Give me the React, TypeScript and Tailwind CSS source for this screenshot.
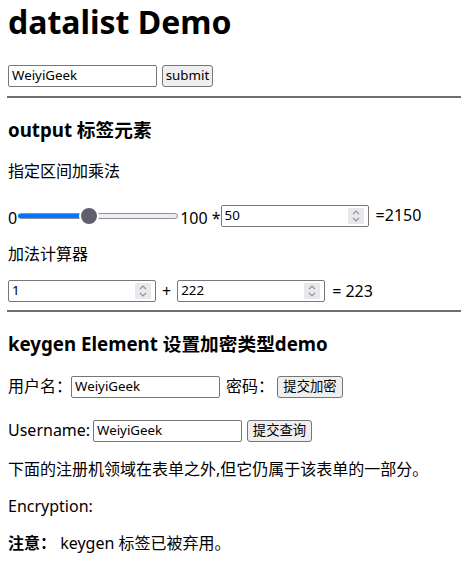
import React from "react";

const font = "font-['Noto_Sans','Noto_Sans_CJK_SC',sans-serif]";

function TextInput({ value, w = "w-[149px]" }: { value: string; w?: string }) {
  return (
    <div className={`${w} h-[22px] border border-[#767676] rounded-[2px] bg-white flex items-center pl-[3px] text-[13.33px] text-black leading-none`}>
      {value}
    </div>
  );
}

function NumberInput({ value, w = "w-[148px]" }: { value: string; w?: string }) {
  return (
    <div className={`${w} h-[22px] border border-[#767676] rounded-[2px] bg-white flex items-center pl-[3px] pr-[4px] text-[13.33px] text-black leading-none`}>
      <span className="flex-1">{value}</span>
      <div className="w-[16px] h-[16px] bg-[#e9e9ed] flex flex-col items-center justify-center gap-[2px]">
        <svg width="8" height="5" viewBox="0 0 8 5" fill="none" stroke="#8d8d99" strokeWidth="1.2">
          <path d="M1 4.2 L4 1.2 L7 4.2" />
        </svg>
        <svg width="8" height="5" viewBox="0 0 8 5" fill="none" stroke="#8d8d99" strokeWidth="1.2">
          <path d="M1 0.8 L4 3.8 L7 0.8" />
        </svg>
      </div>
    </div>
  );
}

function Button({ label, w }: { label: string; w: string }) {
  return (
    <div className={`${w} h-[22px] border border-[#767676] rounded-[3px] bg-[#efefef] flex items-center justify-center text-[13.33px] text-black leading-none whitespace-nowrap`}>
      {label}
    </div>
  );
}

function Hr() {
  return <div className="h-[2px] bg-[#6e6e6e] ml-[-1px] mr-[-8px]" />;
}

export default function App() {
  return (
    <div className={`${font} bg-white text-black w-[461px] h-[567px] overflow-hidden px-[8px]`}>
      <h1 className="text-[32px] font-bold leading-[44px] h-[44px]">datalist Demo</h1>

      <div className="mt-[21px] flex items-center gap-[5px]">
        <TextInput value="WeiyiGeek" />
        <Button label="submit" w="w-[51px]" />
      </div>

      <div className="mt-[9px]"><Hr /></div>

      <h3 className="mt-[19px] text-[18.7px] font-bold leading-[25px] h-[25px]">output 标签元素</h3>

      <p className="mt-[19px] text-[16px] leading-[21px] h-[21px]">指定区间加乘法</p>

      <div className="mt-[22px] h-[23px] flex items-center text-[16px]">
        <span className="leading-[21px] mt-[6px]">0</span>
        <div className="relative w-[160px] h-[20px] ml-[1px] flex items-center">
          <div className="w-full h-[6px] rounded-full bg-[#efefef] border border-[#8f8f9d] flex">
            <div className="w-[70px] h-full bg-[#0075ff] rounded-full ml-[-1px]" />
          </div>
          <div className="absolute left-[61px] top-[0px] w-[20px] h-[20px] rounded-full bg-[#5f5f6e] border-2 border-white" />
        </div>
        <span className="leading-[21px] mt-[6px] ml-[2px] whitespace-nowrap">100 *</span>
        <NumberInput value="50" />
        <span className="leading-[21px] ml-[7px]">=2150</span>
      </div>

      <p className="mt-[17px] text-[16px] leading-[21px] h-[21px]">加法计算器</p>

      <div className="mt-[15px] h-[22px] flex items-center text-[16px]">
        <NumberInput value="1" />
        <span className="ml-[6px] leading-[21px]">+</span>
        <div className="ml-[6px]"><NumberInput value="222" /></div>
        <span className="ml-[7px] leading-[21px]">= 223</span>
      </div>

      <div className="mt-[8px]"><Hr /></div>

      <h3 className="mt-[19px] text-[18.7px] font-bold leading-[25px] h-[25px]">keygen Element 设置加密类型demo</h3>

      <div className="mt-[19px] h-[23px] flex items-center text-[16px]">
        <span className="leading-[21px] w-[63px] whitespace-nowrap">用户名：</span>
        <TextInput value="WeiyiGeek" />
        <span className="ml-[6px] w-[51px] leading-[21px] whitespace-nowrap">密码：</span>
        <Button label="提交加密" w="w-[66px]" />
      </div>

      <div className="mt-[21px] h-[23px] flex items-center text-[16px]">
        <span className="leading-[21px] w-[85px] whitespace-nowrap">Username:</span>
        <TextInput value="WeiyiGeek" />
        <div className="ml-[5px]"><Button label="提交查询" w="w-[65px]" /></div>
      </div>

      <p className="mt-[17px] text-[16px] leading-[21px] h-[21px] whitespace-nowrap">下面的注册机领域在表单之外,但它仍属于该表单的一部分。</p>

      <p className="mt-[16px] text-[16px] leading-[21px] h-[21px]">Encryption:</p>

      <p className="mt-[16px] text-[16px] leading-[21px] h-[21px]">
        <strong className="font-bold">注意：</strong> keygen 标签已被弃用。
      </p>
    </div>
  );
}
